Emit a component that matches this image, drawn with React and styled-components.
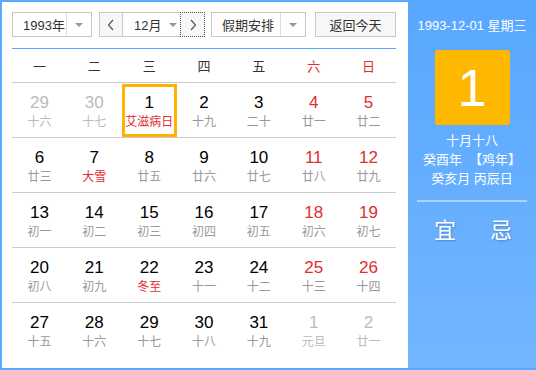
import React from "react";
import styled, { createGlobalStyle } from "styled-components";

const GlobalStyle = createGlobalStyle`
  html, body { margin: 0; padding: 0; background: #fff; }
  body {
    font-family: "Liberation Sans", "Noto Sans CJK SC", sans-serif;
    width: 536px;
    height: 370px;
    overflow: hidden;
  }
`;

const Frame = styled.div`
  box-sizing: border-box;
  width: 536px;
  height: 370px;
  border: 2px solid #5aa8ff;
  border-right: none;
  display: flex;
`;

const Main = styled.div`
  width: 406px;
  background: #fff;
  padding: 10px 10px 0 10px;
  box-sizing: border-box;
`;

const Toolbar = styled.div`
  display: flex;
  align-items: center;
  height: 25px;
  margin-bottom: 11px;
`;

const Select = styled.div`
  box-sizing: border-box;
  display: flex;
  height: 25px;
  width: ${(p) => p.w}px;
  margin-right: ${(p) => p.mr || 0}px;
  border: 1px solid #c8c8c8;
  background: #fff;
  font-size: 13px;
  color: #333;
`;

const SelectLabel = styled.div`
  flex: 1;
  display: flex;
  align-items: center;
  padding-left: ${(p) => p.pl || 10}px;
`;

const Caret = styled.div`
  width: 24px;
  border-left: 1px solid #ddd;
  display: flex;
  align-items: center;
  justify-content: center;
  &::after {
    content: "";
    border-left: 4px solid transparent;
    border-right: 4px solid transparent;
    border-top: 4px solid #999;
  }
`;

const MonthGroup = styled.div`
  display: flex;
  height: 25px;
  margin-right: 6px;
`;

const NavButton = styled.div`
  box-sizing: border-box;
  width: ${(p) => p.w}px;
  height: 25px;
  display: flex;
  align-items: center;
  justify-content: center;
  background: #f7f7f7;
  border: 1px ${(p) => (p.focus ? "dotted #555" : "solid #c8c8c8")};
  ${(p) => (p.focus ? "" : "border-right: none;")}
`;

const MonthSelect = styled.div`
  box-sizing: border-box;
  width: 58px;
  height: 25px;
  display: flex;
  align-items: center;
  border: 1px solid #c8c8c8;
  border-right: none;
  font-size: 13px;
  color: #333;
  padding-left: 11px;
  &::after {
    content: "";
    margin-left: 8px;
    border-left: 4px solid transparent;
    border-right: 4px solid transparent;
    border-top: 4px solid #999;
  }
`;

const TodayButton = styled.div`
  box-sizing: border-box;
  width: 81px;
  height: 25px;
  border: 1px solid #c8c8c8;
  background: #f7f7f7;
  font-size: 13px;
  color: #333;
  display: flex;
  align-items: center;
  justify-content: center;
`;

const Grid = styled.div`
  border-top: 1px solid #5aa8ff;
  display: grid;
  grid-template-columns: repeat(7, 1fr);
  width: 384px;
`;

const WeekHead = styled.div`
  height: 33px;
  display: flex;
  align-items: center;
  justify-content: center;
  font-size: 13px;
  color: ${(p) => (p.red ? "#e02d2d" : "#333")};
  border-bottom: 1px solid #ccc;
`;

const Cell = styled.div`
  box-sizing: border-box;
  height: 55px;
  display: flex;
  flex-direction: column;
  align-items: center;
  padding-top: 10px;
  border-bottom: ${(p) => (p.last ? "none" : "1px solid #ccc")};
  position: relative;
`;

const Highlight = styled.div`
  position: absolute;
  left: 0;
  right: 0;
  top: 1px;
  bottom: 0;
  border: 3px solid #ffb300;
`;

const DayNum = styled.div`
  font-size: 17px;
  line-height: 19px;
  color: ${(p) => p.color};
`;

const Lunar = styled.div`
  font-size: 12px;
  line-height: 16px;
  margin-top: 2px;
  color: ${(p) => p.color};
`;

const Side = styled.div`
  flex: 1;
  background: linear-gradient(#58a7ff, #72b6ff);
  display: flex;
  flex-direction: column;
  align-items: center;
  color: #fff;
`;

const SideDate = styled.div`
  font-size: 13px;
  margin-top: 16px;
  line-height: 16px;
`;

const BigDay = styled.div`
  width: 75px;
  height: 75px;
  margin-top: 16px;
  background: #ffb800;
  border-radius: 3px;
  font-size: 52px;
  display: flex;
  align-items: center;
  justify-content: center;
  font-family: "Liberation Sans", sans-serif;
`;

const SideLine = styled.div`
  font-size: 13px;
  line-height: 19px;
  white-space: pre;
  margin-top: ${(p) => p.mt || 0}px;
`;

const Divider = styled.div`
  width: 110px;
  height: 2px;
  background: rgba(255, 255, 255, 0.45);
  margin-top: 12px;
`;

const Advice = styled.div`
  display: flex;
  gap: 34px;
  margin-top: 10px;
  padding-left: 2px;
  font-size: 22px;
  text-shadow: 1px 1px 2px rgba(0, 0, 0, 0.25);
`;

const WEEK = ["一", "二", "三", "四", "五", "六", "日"];

const DAYS = [
  [29, "十六", "o"], [30, "十七", "o"], [1, "艾滋病日", "f", true], [2, "十九"], [3, "二十"], [4, "廿一"], [5, "廿二"],
  [6, "廿三"], [7, "大雪", "f"], [8, "廿五"], [9, "廿六"], [10, "廿七"], [11, "廿八"], [12, "廿九"],
  [13, "初一"], [14, "初二"], [15, "初三"], [16, "初四"], [17, "初五"], [18, "初六"], [19, "初七"],
  [20, "初八"], [21, "初九"], [22, "冬至", "f"], [23, "十一"], [24, "十二"], [25, "十三"], [26, "十四"],
  [27, "十五"], [28, "十六"], [29, "十七"], [30, "十八"], [31, "十九"], [1, "元旦", "o"], [2, "廿一", "o"],
];

const App = () => (
  <>
    <GlobalStyle />
    <Frame>
      <Main>
        <Toolbar>
          <Select w={80} mr={7}>
            <SelectLabel>1993年</SelectLabel>
            <Caret />
          </Select>
          <MonthGroup>
            <NavButton w={23}>
              <svg width="8" height="12" viewBox="0 0 8 12">
                <path d="M6 1 L1.5 6 L6 11" fill="none" stroke="#555" strokeWidth="1.2" />
              </svg>
            </NavButton>
            <MonthSelect>12月</MonthSelect>
            <NavButton w={25} focus>
              <svg width="8" height="12" viewBox="0 0 8 12">
                <path d="M2 1 L6.5 6 L2 11" fill="none" stroke="#555" strokeWidth="1.2" />
              </svg>
            </NavButton>
          </MonthGroup>
          <Select w={95} mr={9}>
            <SelectLabel pl={10}>假期安排</SelectLabel>
            <Caret />
          </Select>
          <TodayButton>返回今天</TodayButton>
        </Toolbar>
        <Grid>
          {WEEK.map((w, i) => (
            <WeekHead key={w} red={i >= 5}>{w}</WeekHead>
          ))}
          {DAYS.map(([d, l, kind, sel], i) => {
            const col = i % 7;
            const other = kind === "o";
            const numColor = other ? "#bbb" : col >= 5 ? "#e02d2d" : "#000";
            const lunarColor = other ? "#bbb" : kind === "f" ? "#e02d2d" : "#999";
            return (
              <Cell key={i} last={i >= 28}>
                {sel && <Highlight />}
                <DayNum color={numColor}>{d}</DayNum>
                <Lunar color={lunarColor}>{l}</Lunar>
              </Cell>
            );
          })}
        </Grid>
      </Main>
      <Side>
        <SideDate>1993-12-01 星期三</SideDate>
        <BigDay>1</BigDay>
        <SideLine mt={6}>十月十八</SideLine>
        <SideLine>癸酉年  【鸡年】</SideLine>
        <SideLine>癸亥月 丙辰日</SideLine>
        <Divider />
        <Advice>
          <span>宜</span>
          <span>忌</span>
        </Advice>
      </Side>
    </Frame>
  </>
);

export default App;
